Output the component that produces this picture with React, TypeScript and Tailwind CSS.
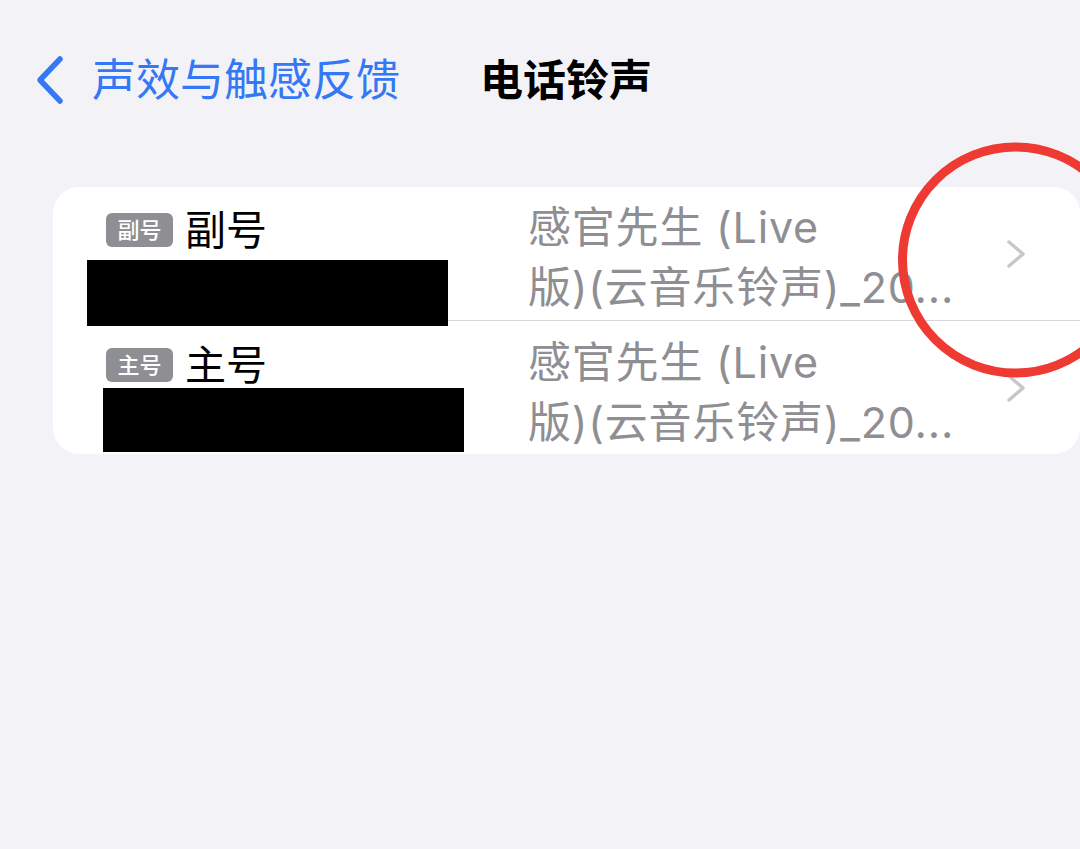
const font = { fontFamily: '"Inter", "Noto Sans CJK SC", sans-serif' };

function Chevron({ className }: { className?: string }) {
  return (
    <svg className={className} viewBox="0 0 22 32" fill="none">
      <path d="M4 4 L18 16 L4 28" stroke="currentColor" strokeWidth="3.5" strokeLinecap="round" strokeLinejoin="round" />
    </svg>
  );
}

function Row({ tag, name, barMl, barW, barH, barMt, pt, textPt }: {
  tag: string, name: string, barMl: string, barW: string, barH: string, barMt: string, pt: string, textPt: string
}) {
  return (
    <div className="flex h-[133px]">
      <div className={`flex-none w-[475px] ${pt}`}>
        <div className="flex items-center h-[44px] ml-[53px]">
          <span className="flex items-center justify-center w-[67px] h-[34px] rounded-[6px] bg-[#8e8e93] text-white text-[22px] font-medium leading-none">
            {tag}
          </span>
          <span className="ml-[12px] text-[41px] leading-[44px] text-black">{name}</span>
        </div>
        <div className={`relative z-10 bg-black ${barMl} ${barW} ${barH} ${barMt}`} />
      </div>
      <div className={`flex-1 ${textPt} text-[43px] tracking-[0.8px] leading-[60px] text-[#8e8e93] whitespace-nowrap`}>
        <div>感官先生 (Live</div>
        <div>版)(云音乐铃声)_20...</div>
      </div>
      <div className="flex-none flex items-center pr-[53px]">
        <Chevron className="w-[22px] h-[32px] text-[#c7c7cc]" />
      </div>
    </div>
  );
}

export default function App() {
  return (
    <div className="relative w-[1080px] h-[849px] overflow-hidden bg-[#f2f2f7]" style={font}>
      <div className="flex items-center h-[56px] mt-[52px]">
        <svg className="ml-[33px] w-[34px] h-[50px] text-[#3478f6]" viewBox="0 0 34 50" fill="none">
          <path d="M27 4 L7 25 L27 46" stroke="currentColor" strokeWidth="5.5" strokeLinecap="round" strokeLinejoin="round" />
        </svg>
        <span className="ml-[25px] text-[44px] leading-none text-[#3478f6]">声效与触感反馈</span>
        <span className="ml-[80px] text-[43px] leading-none font-semibold text-black">电话铃声</span>
      </div>

      <div className="mt-[79px] ml-[53px] w-[1027px] rounded-[26px] bg-white">
        <Row tag="副号" name="副号" barMl="ml-[34px]" barW="w-[361px]" barH="h-[66px]" barMt="mt-[8px] -mb-[6px]" pt="pt-[21px]" textPt="pt-[10px]" />
        <div className="h-px ml-[53px] bg-[#d6d6da]" />
        <Row tag="主号" name="主号" barMl="ml-[50px]" barW="w-[361px]" barH="h-[64px]" barMt="mt-[1px]" pt="pt-[22px]" textPt="pt-[11px]" />
      </div>

      <svg className="absolute left-[890px] top-[135px] w-[260px] h-[250px]" viewBox="0 0 260 250" fill="none">
        <circle cx="125.5" cy="125" r="113" stroke="#ee3a33" strokeWidth="9" />
      </svg>
    </div>
  );
}
